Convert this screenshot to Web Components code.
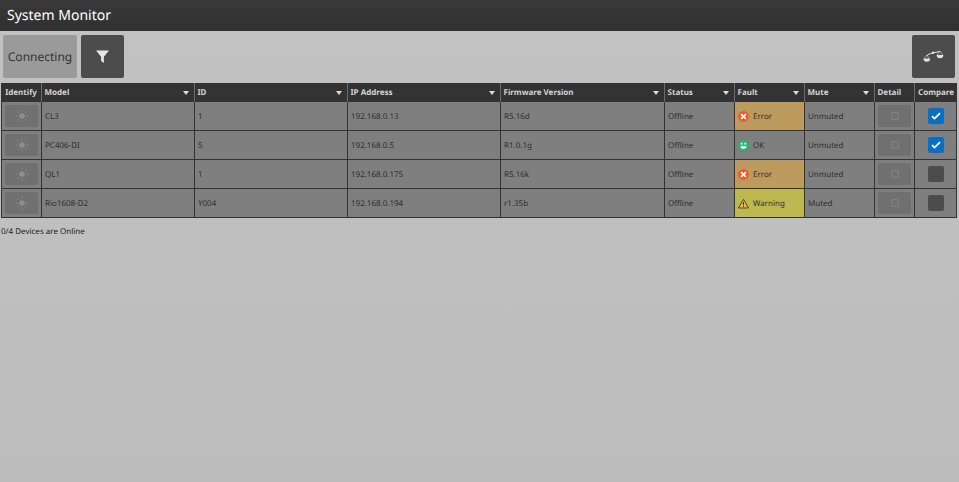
<!DOCTYPE html>
<html>
<head>
<meta charset="utf-8">
<title>System Monitor</title>
<style>
  html, body { margin: 0; height: 100%; }
  body {
    font-family: "Noto Sans", "Open Sans", sans-serif;
    color: #333;
    background: linear-gradient(#c2c2c2, #bcbcbc);
    text-rendering: geometricPrecision;
    overflow: hidden;
  }
</style>
</head>
<body>
<system-monitor></system-monitor>

<script>
// Icons
const icons = {
  filter: `<svg width="13" height="13" viewBox="0 0 13 13"><path d="M0 .5h13L7.9 6.8V13L5.1 11V6.8z" fill="#e6e6e6"/></svg>`,
  scales: `<svg width="21" height="13" viewBox="0 0 21 13" fill="none"><path d="M3.5 6C5.5 3.4 8 3.2 10 2.8S14 2.2 17 1.2" stroke="#dedede" stroke-width="1.1"/><path d="M.5 8.4h6.6a3.3 3.3 0 0 1-6.6 0z" fill="#e4e4e4"/><path d="M13.7 5h6.6a3.3 3.3 0 0 1-6.6 0z" fill="#e4e4e4"/><path d="M3.8 5.4L1 8.4M3.8 5.4l2.8 3M17 1.2L14.2 5M17 1.2L19.8 5" stroke="#cfcfcf" stroke-width=".7"/><circle cx="10" cy="2.8" r="1.2" fill="#e4e4e4"/></svg>`,
  sun: `<svg width="14" height="14" viewBox="0 0 14 14"><circle cx="7" cy="7" r="2.8" fill="#8e8e8e"/><g stroke="#8a8a8a" stroke-width="1"><path d="M7 .5v2M7 11.5v2M.5 7h2M11.5 7h2M2.4 2.4l1.4 1.4M10.2 10.2l1.4 1.4M2.4 11.6l1.4-1.4M10.2 3.8l1.4-1.4"/></g></svg>`,
  detail: `<svg width="8" height="8" viewBox="0 0 8 8"><rect x=".7" y=".7" width="6.6" height="6.6" rx="1" fill="none" stroke="#808080" stroke-width="1.2"/></svg>`,
  check: `<svg width="10" height="8" viewBox="0 0 10 8"><path d="M1 4.2l2.6 2.4L9 1.2" fill="none" stroke="#fff" stroke-width="1.8"/></svg>`,
  error: `<svg width="11" height="11" viewBox="0 0 12 12"><circle cx="6" cy="6" r="5.9" fill="#f0592a"/><path d="M3.4 3.4l5.2 5.2M8.6 3.4L3.4 8.6" stroke="#fff" stroke-width="2"/></svg>`,
  ok: `<svg width="11" height="11" viewBox="0 0 12 12"><circle cx="6" cy="6" r="5.9" fill="#22b573"/><rect x="3" y="3" width="2" height="2" fill="#fff"/><rect x="7" y="3" width="2" height="2" fill="#fff"/><path d="M2.6 6.8h6.8C9.2 9 7.5 9.6 6 9.6S2.8 9 2.6 6.8z" fill="#fff"/></svg>`,
  warning: `<svg width="11" height="11" viewBox="0 0 13 12"><path d="M6.5 1L12.4 11.3H.6z" fill="#f7b733" stroke="#333" stroke-width="1" stroke-linejoin="round"/><path d="M6.5 4.2v3.8M6.5 8.9v1.2" stroke="#333" stroke-width="1.2"/></svg>`
};

const gridCols = "41px 153px 153px 153px 164px 70px 70px 70px 40px 42px";

class AppTitlebar extends HTMLElement {
  constructor() {
    super();
    this.attachShadow({ mode: "open" }).innerHTML = `
      <style>
        :host {
          display: flex;
          align-items: center;
          height: 31px;
          padding: 0 7px;
          box-sizing: border-box;
          background: linear-gradient(#393939, #303030);
          color: #fff;
          font-size: 14px;
        }
      </style>
      <slot></slot>`;
  }
}

class ToolButton extends HTMLElement {
  constructor() {
    super();
    this.attachShadow({ mode: "open" }).innerHTML = `
      <style>
        :host {
          display: flex;
          align-items: center;
          justify-content: center;
          box-sizing: border-box;
          height: 43px;
          min-width: 43px;
          border-radius: 2px;
          background: #4c4c4c;
        }
        :host([status]) {
          width: 74px;
          background: #9a9a9a;
          color: #333;
          font-size: 12px;
        }
      </style>
      <slot></slot>`;
  }
}

class TableHead extends HTMLElement {
  constructor() {
    super();
    this.attachShadow({ mode: "open" }).innerHTML = `
      <style>
        :host {
          display: grid;
          grid-template-columns: ${gridCols};
          height: 19px;
          background: #333;
        }
      </style>
      <slot></slot>`;
  }
}

class HeadCell extends HTMLElement {
  constructor() {
    super();
    const sort = this.hasAttribute("sort") ? `<span class="sort"></span>` : "";
    this.attachShadow({ mode: "open" }).innerHTML = `
      <style>
        :host {
          display: flex;
          align-items: center;
          justify-content: space-between;
          box-sizing: border-box;
          padding: 0 5px 0 2.5px;
          border-right: 1px solid #6b6b6b;
          color: #d4d4d4;
          font-size: 8px;
          font-weight: 700;
          white-space: nowrap;
        }
        :host([center]) { justify-content: center; padding: 0; }
        :host(:last-child) { border-right: 0; }
        span:first-child { padding-top: 2px; }
        .sort {
          width: 0;
          height: 0;
          border-left: 3px solid transparent;
          border-right: 3px solid transparent;
          border-top: 4px solid #ddd;
        }
      </style>
      <span><slot></slot></span>${sort}`;
  }
}

class DeviceRow extends HTMLElement {
  constructor() {
    super();
    this.attachShadow({ mode: "open" }).innerHTML = `
      <style>
        :host {
          display: grid;
          grid-template-columns: ${gridCols};
          height: 29px;
          box-sizing: border-box;
          border-bottom: 1px solid #333;
          background: #7f7f7f;
        }
      </style>
      <slot></slot>`;
  }
}

class DeviceCell extends HTMLElement {
  constructor() {
    super();
    this.attachShadow({ mode: "open" }).innerHTML = `
      <style>
        :host {
          display: flex;
          align-items: center;
          box-sizing: border-box;
          padding: 0 3px;
          border-right: 1px solid #333;
          font-size: 8px;
          color: #2e2e2e;
          white-space: nowrap;
          overflow: hidden;
        }
        :host(:first-child) { border-left: 1px solid #333; }
        :host([center]) { justify-content: center; padding: 0; }
        :host([level=error]) { background: #bd9a5d; }
        :host([level=warning]) { background: #bdb84f; }
        ::slotted(svg) { margin-right: 4px; flex: none; }
      </style>
      <slot></slot>`;
  }
}

class CellButton extends HTMLElement {
  constructor() {
    super();
    this.attachShadow({ mode: "open" }).innerHTML = `
      <style>
        :host {
          display: flex;
          align-items: center;
          justify-content: center;
          width: 33px;
          height: 22px;
          border-radius: 2px;
          background: #707070;
        }
      </style>
      <slot></slot>`;
  }
}

class CompareCheck extends HTMLElement {
  constructor() {
    super();
    this.attachShadow({ mode: "open" }).innerHTML = `
      <style>
        :host {
          display: flex;
          align-items: center;
          justify-content: center;
          width: 16px;
          height: 16px;
          border-radius: 2px;
          background: #4c4c4c;
        }
        :host([checked]) { background: #0a6fc2; }
      </style>
      <slot></slot>`;
  }
}

class SystemMonitor extends HTMLElement {
  constructor() {
    super();
    const head = [
      ["Identify", "center"], ["Model", "sort"], ["ID", "sort"], ["IP Address", "sort"], ["Firmware Version", "sort"],
      ["Status", "sort"], ["Fault", "sort"], ["Mute", "sort"], ["Detail", ""], ["Compare", "center"]
    ].map(([t, a]) => `<head-cell ${a}>${t}</head-cell>`).join("");

    const devices = [
      ["CL3", "1", "192.168.0.13", "R5.16d", "error", "Unmuted", true],
      ["PC406-DI", "5", "192.168.0.5", "R1.0.1g", "ok", "Unmuted", true],
      ["QL1", "1", "192.168.0.175", "R5.16k", "error", "Unmuted", false],
      ["Rio1608-D2", "Y004", "192.168.0.194", "r1.35b", "warning", "Muted", false]
    ];
    const names = { error: "Error", ok: "OK", warning: "Warning" };
    const rows = devices.map(d => `
      <device-row>
        <device-cell center><cell-button>${icons.sun}</cell-button></device-cell>
        <device-cell>${d[0]}</device-cell>
        <device-cell>${d[1]}</device-cell>
        <device-cell>${d[2]}</device-cell>
        <device-cell>${d[3]}</device-cell>
        <device-cell>Offline</device-cell>
        <device-cell level="${d[4]}">${icons[d[4]]}${names[d[4]]}</device-cell>
        <device-cell>${d[5]}</device-cell>
        <device-cell center><cell-button>${icons.detail}</cell-button></device-cell>
        <device-cell center><compare-check ${d[6] ? "checked" : ""}>${d[6] ? icons.check : ""}</compare-check></device-cell>
      </device-row>`).join("");

    this.attachShadow({ mode: "open" }).innerHTML = `
      <style>
        :host { display: block; }
        .tools {
          display: flex;
          gap: 4px;
          padding: 4px 4px 5px 3px;
        }
        .right { margin-left: auto; }
        .table { margin: 0 2px 0 1px; }
        .summary { padding: 8px 1px 0; font-size: 8px; color: #222; }
      </style>
      <app-titlebar>System Monitor</app-titlebar>
      <div class="tools">
        <tool-button status>Connecting</tool-button>
        <tool-button>${icons.filter}</tool-button>
        <tool-button class="right">${icons.scales}</tool-button>
      </div>
      <div class="table">
        <table-head>${head}</table-head>
        ${rows}
      </div>
      <div class="summary">0/4 Devices are Online</div>`;
  }
}

customElements.define("app-titlebar", AppTitlebar);
customElements.define("tool-button", ToolButton);
customElements.define("table-head", TableHead);
customElements.define("head-cell", HeadCell);
customElements.define("device-row", DeviceRow);
customElements.define("device-cell", DeviceCell);
customElements.define("cell-button", CellButton);
customElements.define("compare-check", CompareCheck);
customElements.define("system-monitor", SystemMonitor);
</script>
</body>
</html>
